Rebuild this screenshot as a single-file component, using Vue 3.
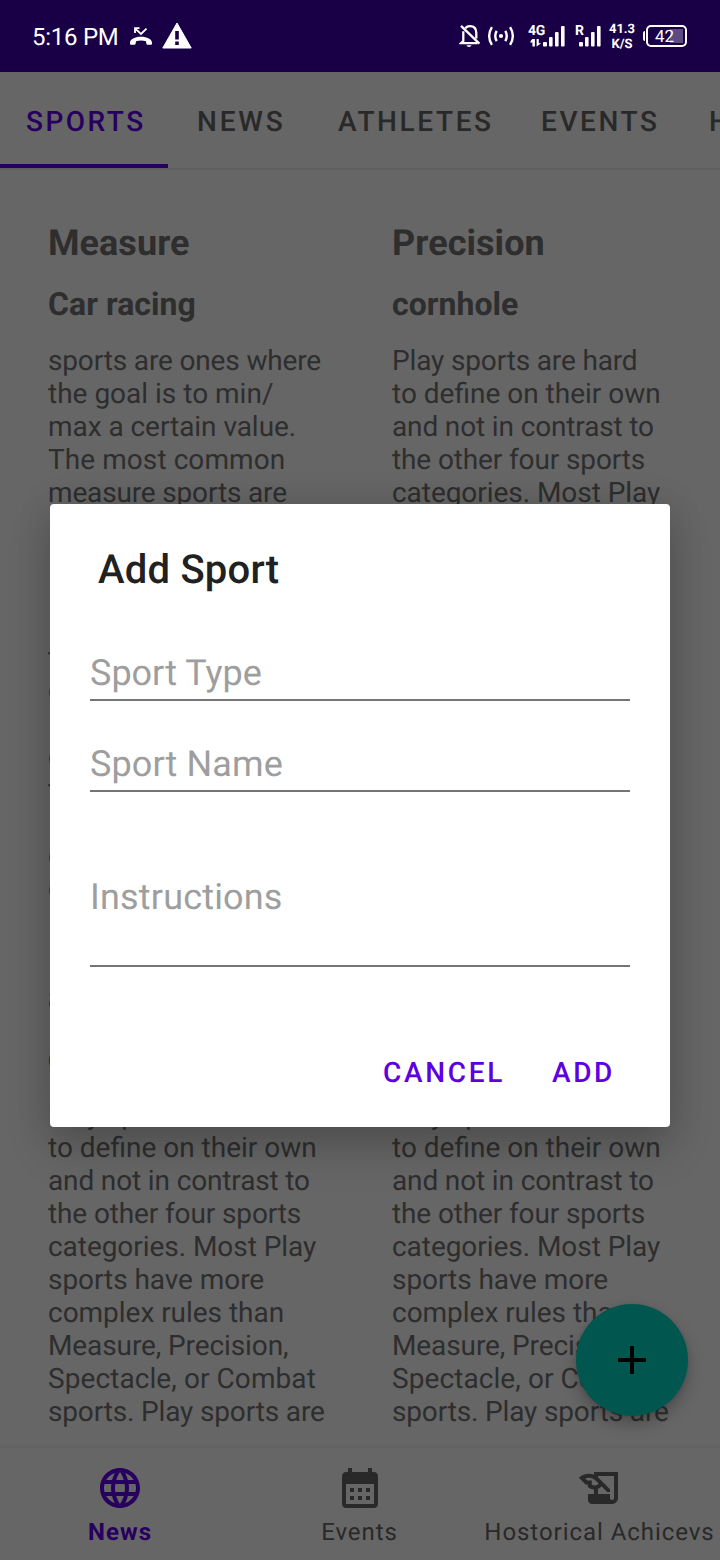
<script setup>
const tabs = ['SPORTS', 'NEWS', 'ATHLETES', 'EVENTS', 'HISTORY']

// Each line carries its tracking in pixels.
const play = [
  ['Play sports are hard', -0.15],
  ['to define on their own', 0],
  ['and not in contrast to', -0.14],
  ['the other four sports', -0.12],
  ['categories. Most Play', -0.05],
  ['sports have more', -0.06],
  ['complex rules than', -0.03],
  ['Measure, Precision,', -0.1],
  ['Spectacle, or Combat', 0.08],
  ['sports. Play sports are', -0.15],
]

const measure = [
  ['sports are ones where', -0.15],
  ['the goal is to min/', 0],
  ['max a certain value.', -0.05],
  ['The most common', 0.07],
  ['measure sports are', -0.16],
  ['', 0],
  ['', 0],
  ['', 0],
  ['', 0],
  ['the', 0],
  ['or', 0],
  ['', 0],
  ['or', 0],
  ['the', 0],
  ['', 0],
  ['or', 0],
  ['or', 0],
]

const columns = [
  [
    { type: 'Measure', name: 'Car racing', lines: measure },
    { type: 'a', name: 'cornhole', lines: play },
  ],
  [
    { type: 'Precision', name: 'cornhole', lines: play.slice(0, 5) },
    { type: '', name: '', lines: play },
  ],
]

const fields = [
  { label: 'Sport Type', kind: 'type' },
  { label: 'Sport Name', kind: 'name' },
  { label: 'Instructions', kind: 'instructions' },
]
</script>

<template>
  <div class="screen">
    <header class="status">
      <span class="clock">5:16 PM</span>
      <svg class="missed" width="24" height="24" viewBox="0 0 24 24" fill="none">
        <path d="M6.2 2.6 12 7.9 17.5 2.6M6 7V2.2H10.5" stroke="#fff" stroke-width="1.8" />
        <path d="M1 16.6C1 13.2 6 10.7 12 10.7S23 13.2 23 16.6v1.2q0 1-1 1h-3.5q-1 0-1.1-1L17 15.2Q12 13.6 7 15.2l-.4 2.6q-.1 1-1.1 1H2q-1 0-1-1Z" fill="#fff" />
      </svg>
      <svg class="warn" width="30" height="27" viewBox="0 0 30 27">
        <path d="M15 1 29.2 26H.8Z" fill="#fff" stroke="#fff" stroke-linejoin="round" />
        <path d="M13.2 9h3.6v8.5h-3.6zM13.2 19.5h3.6V23h-3.6z" fill="#190046" />
      </svg>
      <span class="grow"></span>
      <svg class="bell" width="22" height="24" viewBox="0 0 22 24" fill="none" stroke="#fff" stroke-width="2.3">
        <path d="M4.3 7.2V17L2 19.2H18.6M6.2 4.2Q8 2.2 11 2.2 17.3 2.2 17.3 9v5.4" />
        <path d="M2 1.8 20.4 19.6" />
        <path d="M7.4 21.2h5.2Q12 23 10 23T7.4 21.2Z" fill="#fff" stroke="none" />
      </svg>
      <svg class="hotspot" width="28" height="20" viewBox="0 0 28 20" fill="none" stroke="#fff" stroke-width="2.4">
        <circle cx="14" cy="10" r="2.1" fill="#fff" stroke="none" />
        <path d="M9.7 4.8Q6.8 10 9.7 15.2M18.3 4.8Q21.2 10 18.3 15.2M4.9 1.2Q-.6 10 4.9 18.8M23.1 1.2Q28.6 10 23.1 18.8" />
      </svg>
      <span class="net">
        <span class="netlabel">4G</span>
        <svg width="38" height="24" viewBox="0 0 38 24" fill="#fff">
          <path d="M5.4 15H7.9V22.5H5.4V18.2L3.6 19V17ZM9.6 15h2.2v4.2h2.4L9.6 22.5Z" />
          <rect x="16" y="18" width="4" height="4.5" rx="1" />
          <rect x="22" y="13" width="3.6" height="9.5" rx="1" />
          <rect x="28" y="8" width="3.6" height="14.5" rx="1" />
          <rect x="34" y="2" width="3.6" height="20.5" rx="1" />
        </svg>
      </span>
      <span class="net roaming">
        <span class="netlabel">R</span>
        <svg width="26" height="24" viewBox="0 0 26 24" fill="#fff">
          <rect x="4" y="18" width="4" height="4.5" rx="1" />
          <rect x="10" y="13" width="3.6" height="9.5" rx="1" />
          <rect x="16" y="8" width="3.6" height="14.5" rx="1" />
          <rect x="22" y="2" width="3.6" height="20.5" rx="1" />
        </svg>
      </span>
      <span class="speed"><span>41.3</span><span>K/S</span></span>
      <span class="battery"><span class="cell">42</span></span>
    </header>

    <nav class="tabs">
      <span v-for="(tab, i) in tabs" :key="tab" class="tab" :class="['tab' + i, { active: i === 0 }]">{{ tab }}</span>
    </nav>

    <main class="content">
      <div v-for="(column, c) in columns" :key="c" class="column">
        <article v-for="(sport, s) in column" :key="s" class="sport">
          <h2>{{ sport.type }}</h2>
          <h3>{{ sport.name }}</h3>
          <p v-for="([text, tracking], l) in sport.lines" :key="l" :style="{ letterSpacing: tracking + 'px' }">{{ text }}</p>
        </article>
      </div>
      <div class="fab">
        <svg width="28" height="28" viewBox="0 0 28 28"><path d="M12 0h4v12h12v4H16v12h-4V16H0v-4h12z" /></svg>
      </div>
    </main>

    <footer class="bottom">
      <div class="item selected">
        <svg width="48" height="48" viewBox="0 0 24 24" fill="currentColor">
          <path d="M11.99 2C6.47 2 2 6.48 2 12s4.47 10 9.99 10C17.52 22 22 17.52 22 12S17.52 2 11.99 2zm6.93 6h-2.95c-.32-1.25-.78-2.45-1.38-3.56 1.84.63 3.37 1.91 4.33 3.56zM12 4.04c.83 1.2 1.48 2.53 1.91 3.96h-3.82c.43-1.43 1.08-2.76 1.91-3.96zM4.26 14C4.1 13.36 4 12.69 4 12s.1-1.36.26-2h3.38c-.08.66-.14 1.32-.14 2s.06 1.34.14 2H4.26zm.82 2h2.95c.32 1.25.78 2.45 1.38 3.56-1.84-.63-3.37-1.9-4.33-3.56zm2.95-8H5.08c.96-1.66 2.49-2.93 4.33-3.56C8.81 5.55 8.35 6.75 8.03 8zM12 19.96c-.83-1.2-1.48-2.53-1.91-3.96h3.82c-.43 1.43-1.08 2.76-1.91 3.96zM14.34 14H9.66c-.09-.66-.16-1.32-.16-2s.07-1.35.16-2h4.68c.09.65.16 1.32.16 2s-.07 1.34-.16 2zm.25 5.56c.6-1.11 1.06-2.31 1.38-3.56h2.95c-.96 1.65-2.49 2.93-4.33 3.56zM16.36 14c.08-.66.14-1.32.14-2s-.06-1.34-.14-2h3.38c.16.64.26 1.31.26 2s-.1 1.36-.26 2h-3.38z" />
        </svg>
        <span>News</span>
      </div>
      <div class="item">
        <svg width="48" height="48" viewBox="0 0 24 24" fill="currentColor">
          <path d="M19 4h-1V2h-2v2H8V2H6v2H5c-1.11 0-1.99.9-1.99 2L3 20c0 1.1.89 2 2 2h14c1.1 0 2-.9 2-2V6c0-1.1-.9-2-2-2zm0 16H5V10h14v10zM9 14H7v-2h2v2zm4 0h-2v-2h2v2zm4 0h-2v-2h2v2zm-8 4H7v-2h2v2zm4 0h-2v-2h2v2zm4 0h-2v-2h2v2z" />
        </svg>
        <span>Events</span>
      </div>
      <div class="item">
        <svg width="48" height="48" viewBox="0 0 24 24" fill="currentColor">
          <path d="M9 4v1.38c-.83-.33-1.72-.5-2.61-.5-1.79 0-3.58.68-4.95 2.05l3.33 3.33h1.11v1.11c.86.86 1.98 1.31 3.11 1.36V15H6v3c0 1.1.9 2 2 2h10c1.66 0 3-1.34 3-3V4H9zm-1.11 6.41V8.26H5.61L4.57 7.22a5.07 5.07 0 0 1 1.82-.34c1.34 0 2.59.52 3.54 1.46l1.41 1.41-.2.2a2.7 2.7 0 0 1-1.92.8c-.47 0-.93-.12-1.33-.34zM19 17c0 .55-.45 1-1 1s-1-.45-1-1v-2h-6v-2.59c.57-.23 1.1-.57 1.56-1.03l.2-.2L15.59 14H17v-1.41l-6-5.97V6h8v11z" />
        </svg>
        <span>Hostorical Achicevs</span>
      </div>
    </footer>

    <section class="dialog">
      <h1>Add Sport</h1>
      <div v-for="field in fields" :key="field.kind" class="field" :class="field.kind">{{ field.label }}</div>
      <div class="actions">
        <button class="cancel">CANCEL</button>
        <button class="add">ADD</button>
      </div>
    </section>
  </div>
</template>

<style>
body {
  margin: 0;
  background: #666;
}
</style>

<style scoped>
.screen {
  position: relative;
  width: 720px;
  height: 1560px;
  overflow: hidden;
  display: flex;
  flex-direction: column;
  background: #666;
  color: #2e2e2e;
  font-family: Roboto, sans-serif;
  text-rendering: geometricPrecision;
}
.status {
  box-sizing: border-box;
  height: 72px;
  flex: none;
  display: flex;
  align-items: center;
  padding: 0 33px 0 32px;
  background: #190046;
  color: #fff;
}
.clock {
  width: 86px;
  font-size: 24px;
  letter-spacing: -0.25px;
  white-space: nowrap;
  padding-top: 2px;
}
.missed {
  margin-left: 11px;
  margin-top: 3px;
}
.warn {
  margin-left: 9px;
  margin-bottom: 1px;
}
.grow { flex: 1; }
.bell { margin-right: 6px; }
.hotspot { margin-right: 12px; }
.net {
  position: relative;
  display: flex;
  margin-right: 10px;
}
.roaming { margin-right: 8px; }
.netlabel {
  position: absolute;
  left: 1px;
  top: -1px;
  font-size: 14px;
  line-height: 16px;
  font-weight: 700;
  letter-spacing: -0.3px;
}
.roaming .netlabel { left: 0; }
.speed {
  width: 26px;
  display: flex;
  flex-direction: column;
  align-items: center;
  font-size: 13px;
  line-height: 15px;
  font-weight: 700;
  padding-top: 1px;
  margin-right: 8px;
}
.battery {
  display: flex;
  align-items: center;
}
.battery::before {
  content: '';
  width: 2px;
  height: 10px;
  border-radius: 2px 0 0 2px;
  background: #fff;
  margin-right: 1px;
}
.cell {
  box-sizing: border-box;
  width: 41px;
  height: 22px;
  border: 2px solid #fff;
  border-radius: 5px;
  font-size: 17px;
  line-height: 20px;
  padding-left: 7px;
  background: linear-gradient(#5d4b80, #5d4b80) 22px 2px / 13px 14px no-repeat;
}
.tabs {
  box-sizing: border-box;
  height: 98px;
  flex: none;
  display: flex;
  border-bottom: 2px solid #5f5f5f;
  color: #292929;
  font-size: 28px;
  font-weight: 500;
  letter-spacing: 2.6px;
  line-height: 100px;
  white-space: nowrap;
}
.tab {
  box-sizing: border-box;
  flex: none;
  height: 96px;
}
.tab0 { width: 168px; padding-left: 26px; letter-spacing: 2.5px; }
.tab1 { width: 145px; padding-left: 29px; letter-spacing: 2.8px; }
.tab2 { width: 202px; padding-left: 25px; }
.tab3 { width: 168px; padding-left: 26px; }
.tab4 { padding-left: 26px; }
.active {
  color: #27005f;
  border-bottom: 4px solid #27005f;
}
.content {
  position: relative;
  height: 1276px;
  flex: none;
  overflow: hidden;
  display: flex;
  padding-left: 48px;
}
.column {
  width: 344px;
  flex: none;
  padding-top: 50px;
}
.sport { height: 754px; }
h1, h2, h3, p { margin: 0; }
h2 {
  height: 46px;
  font-size: 36px;
  line-height: 46px;
  font-weight: 700;
  letter-spacing: 0.05px;
}
h3 {
  height: 40px;
  font-size: 32px;
  line-height: 40px;
  font-weight: 700;
  letter-spacing: 0.04px;
  padding: 18px 0 20px;
}
p {
  height: 33px;
  font-size: 28px;
  line-height: 33px;
  white-space: nowrap;
}
.fab {
  position: absolute;
  left: 576px;
  top: 1134px;
  width: 112px;
  height: 112px;
  border-radius: 50%;
  background: #01574f;
  box-shadow: 0 8px 16px rgba(0, 0, 0, .25), 0 1px 4px rgba(0, 0, 0, .1);
  display: flex;
  align-items: center;
  justify-content: center;
}
.bottom {
  box-sizing: border-box;
  height: 114px;
  display: flex;
  border-top: 2px solid #636363;
  color: #292929;
}
.item {
  width: 240px;
  flex: none;
  display: flex;
  flex-direction: column;
  align-items: center;
  padding-top: 16px;
  font-size: 24px;
  line-height: 28px;
  letter-spacing: 0.95px;
  white-space: nowrap;
}
.item span {
  margin-top: 6px;
  margin-right: 1px;
}
.selected {
  color: #27005f;
  font-weight: 700;
}
.selected span { margin-right: 0; letter-spacing: 1.1px; }
.dialog {
  position: absolute;
  box-sizing: border-box;
  left: 50px;
  top: 504px;
  width: 620px;
  height: 623px;
  padding: 0 40px;
  border-radius: 4px;
  background: #fff;
  box-shadow: 0 22px 44px rgba(0, 0, 0, .18), 0 0 36px rgba(0, 0, 0, .12);
}
h1 {
  padding: 42px 0 0 8px;
  font-size: 40px;
  line-height: 48px;
  font-weight: 500;
  letter-spacing: 0.22px;
  color: #212121;
}
.field {
  box-sizing: border-box;
  border-bottom: 2px solid #757575;
  color: #9e9e9e;
  font-size: 36px;
  line-height: 42px;
}
.type { height: 107px; padding-top: 58px; }
.name { height: 91px; padding-top: 42px; letter-spacing: 0.1px; }
.instructions { height: 175px; padding-top: 84px; letter-spacing: 0.18px; }
.actions {
  display: flex;
  justify-content: flex-end;
  padding: 82px 15px 0 0;
  gap: 47px;
}
button {
  border: 0;
  padding: 0;
  background: none;
  font: 500 28px/48px Roboto, sans-serif;
  text-rendering: inherit;
  letter-spacing: 2.65px;
  color: #5d00e2;
}
</style>
